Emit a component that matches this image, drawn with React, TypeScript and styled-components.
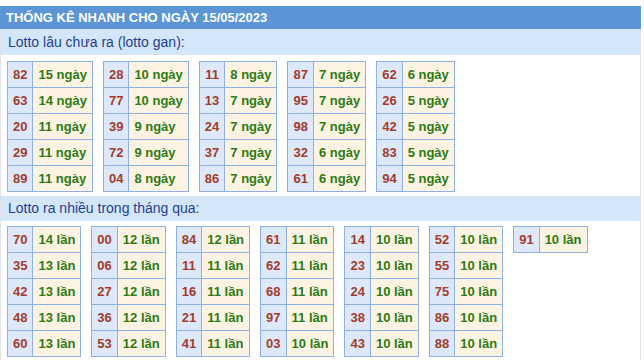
import React from 'react';
import styled, { createGlobalStyle } from 'styled-components';

const GlobalStyle = createGlobalStyle`
    html, body {
        margin: 0;
        padding: 0;
        background: #ffffff;
        font-family: 'Liberation Sans', Arial, sans-serif;
    }
`;

const Page = styled.div`
    padding-top: 6px;
    width: 641px;
`;

const Box = styled.div`
    border-left: 1px solid #dfe3e8;
    border-right: 1px solid #dfe3e8;
`;

const TitleBar = styled.div`
    height: 23px;
    line-height: 23px;
    background: #5b95d6;
    color: #ffffff;
    font-size: 13px;
    font-weight: bold;
    padding-left: 6px;
    white-space: nowrap;
`;

const SubTitle = styled.div<{ $h: number }>`
    height: ${(p) => p.$h}px;
    line-height: ${(p) => p.$h}px;
    background: #d4e7fa;
    color: #1f3f8e;
    font-size: 14px;
    padding-left: 7px;
    white-space: nowrap;
`;

const Grid = styled.div<{ $pt: number }>`
    display: flex;
    flex-wrap: wrap;
    align-items: flex-start;
    gap: 10px;
    padding: ${(p) => p.$pt}px 6px 4px 6px;
`;

const Table = styled.table`
    border-collapse: separate;
    border-spacing: 0;
    border-top: 1px solid #8fb0e2;
    border-left: 1px solid #8fb0e2;
`;

const Cell = styled.td<{ $kind: 'num' | 'val' }>`
    height: 25px;
    padding: 0 5px;
    border-right: 1px solid #8fb0e2;
    border-bottom: 1px solid #8fb0e2;
    background: ${(p) => (p.$kind === 'num' ? '#dde9fa' : '#fdf3e2')};
    color: ${(p) => (p.$kind === 'num' ? '#a23c2b' : '#2b7b16')};
    font-size: 13px;
    font-weight: bold;
    text-align: ${(p) => (p.$kind === 'num' ? 'center' : 'left')};
    white-space: nowrap;
    line-height: 25px;
`;

type Item = [string, number];

const ganCols: Item[][] = [
    [['82', 15], ['63', 14], ['20', 11], ['29', 11], ['89', 11]],
    [['28', 10], ['77', 10], ['39', 9], ['72', 9], ['04', 8]],
    [['11', 8], ['13', 7], ['24', 7], ['37', 7], ['86', 7]],
    [['87', 7], ['95', 7], ['98', 7], ['32', 6], ['61', 6]],
    [['62', 6], ['26', 5], ['42', 5], ['83', 5], ['94', 5]],
];

const hotCols: Item[][] = [
    [['70', 14], ['35', 13], ['42', 13], ['48', 13], ['60', 13]],
    [['00', 12], ['06', 12], ['27', 12], ['36', 12], ['53', 12]],
    [['84', 12], ['11', 11], ['16', 11], ['21', 11], ['41', 11]],
    [['61', 11], ['62', 11], ['68', 11], ['97', 11], ['03', 10]],
    [['14', 10], ['23', 10], ['24', 10], ['38', 10], ['43', 10]],
    [['52', 10], ['55', 10], ['75', 10], ['86', 10], ['88', 10]],
    [['91', 10]],
];

const StatTable = ({ rows, unit }: { rows: Item[]; unit: string }) => (
    <Table>
        <tbody>
            {rows.map(([num, count]) => (
                <tr key={num}>
                    <Cell $kind="num">{num}</Cell>
                    <Cell $kind="val">
                        {count} {unit}
                    </Cell>
                </tr>
            ))}
        </tbody>
    </Table>
);

const App = () => {
    return (
        <Page>
            <GlobalStyle />
            <TitleBar>THỐNG KÊ NHANH CHO NGÀY 15/05/2023</TitleBar>
            <Box>
                <SubTitle $h={26}>Lotto lâu chưa ra (lotto gan):</SubTitle>
                <Grid $pt={6}>
                    {ganCols.map((col, i) => (
                        <StatTable key={i} rows={col} unit="ngày" />
                    ))}
                </Grid>
                <SubTitle $h={25}>Lotto ra nhiều trong tháng qua:</SubTitle>
                <Grid $pt={5}>
                    {hotCols.map((col, i) => (
                        <StatTable key={i} rows={col} unit="lần" />
                    ))}
                </Grid>
            </Box>
        </Page>
    );
};

export default App;
